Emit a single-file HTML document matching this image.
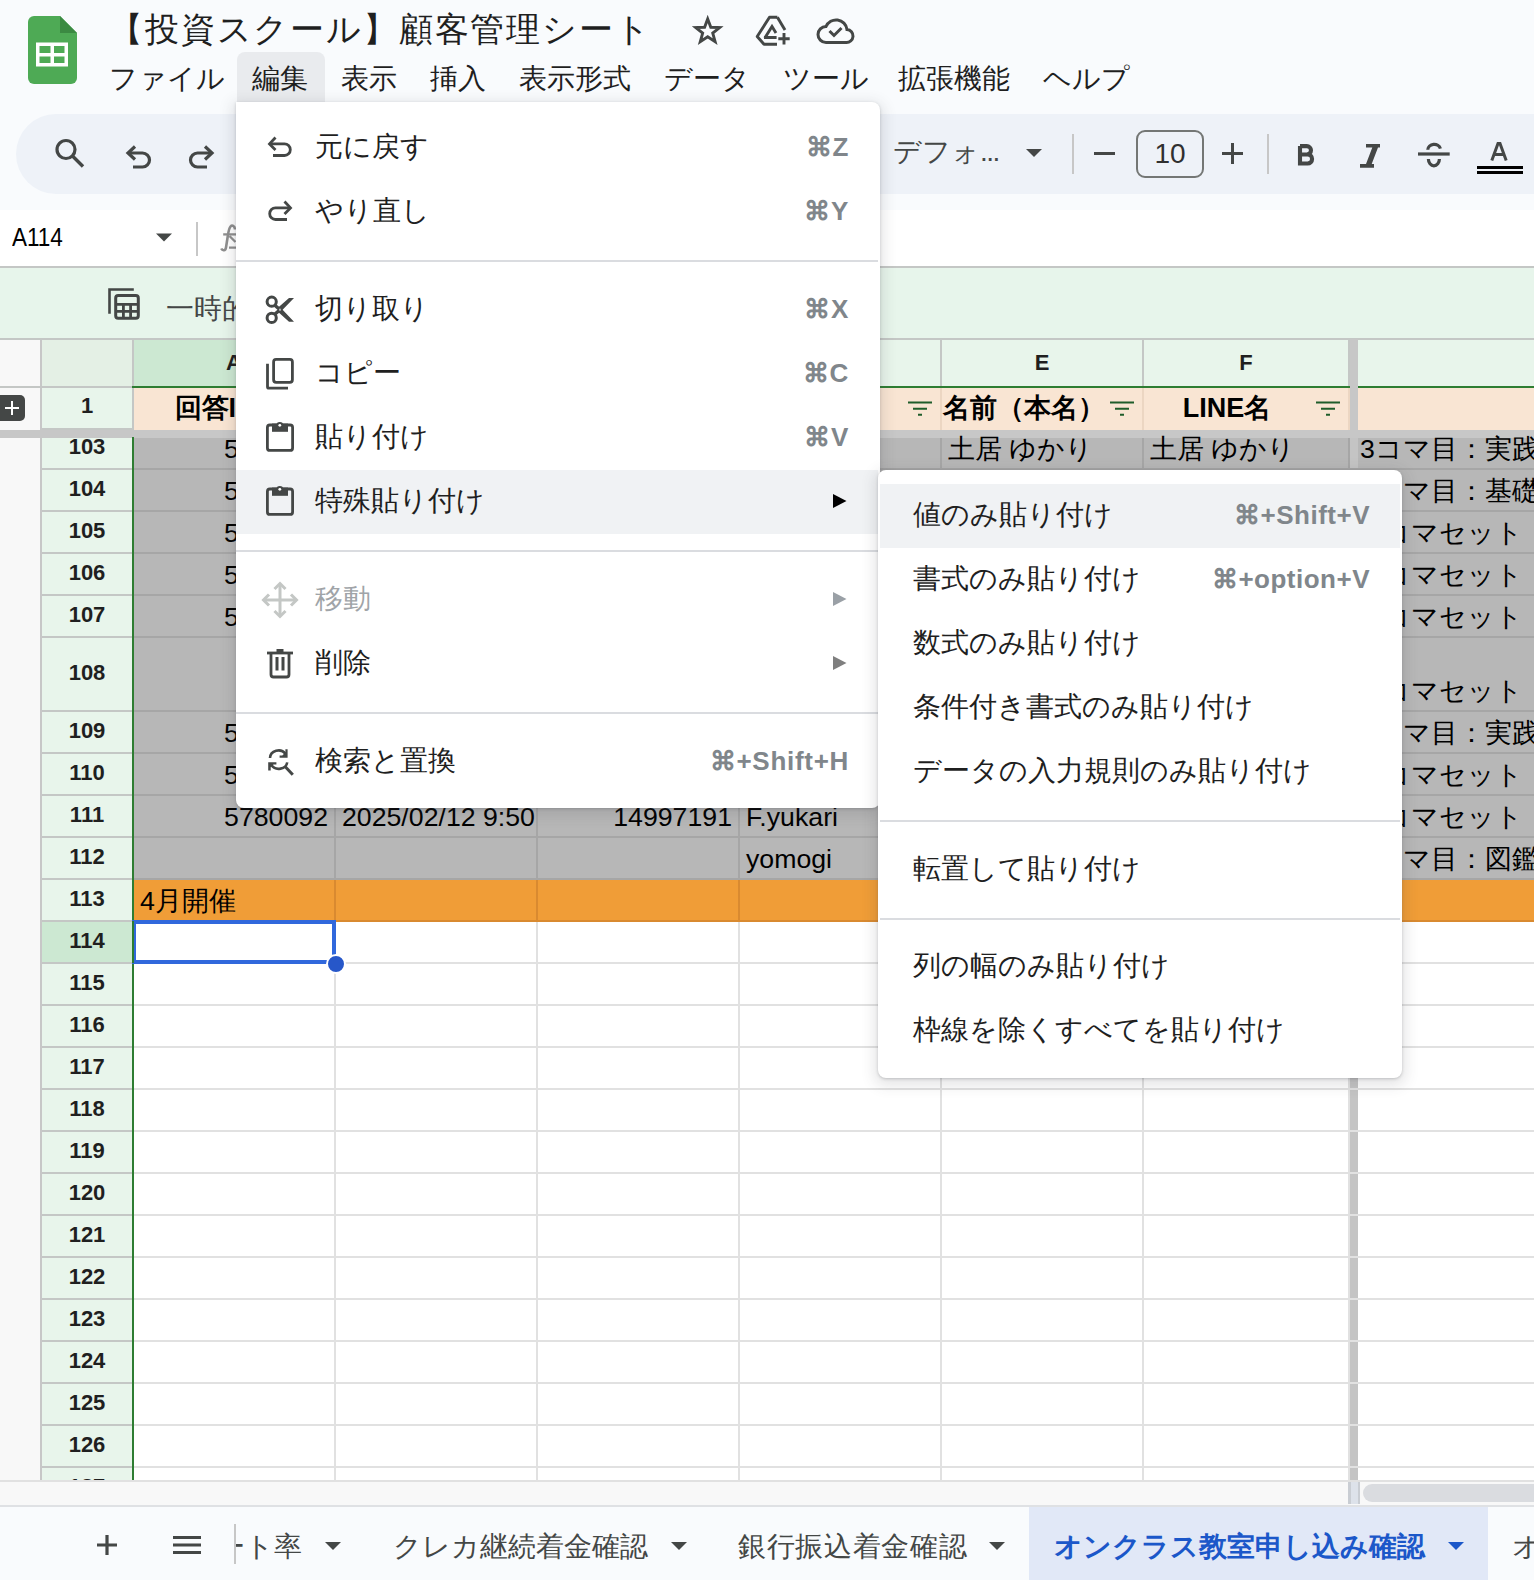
<!DOCTYPE html>
<html><head><meta charset="utf-8">
<style>
*{box-sizing:border-box;margin:0;padding:0}
html,body{width:1534px;height:1580px;overflow:hidden;background:#f9fbfd;font-family:"Liberation Sans",sans-serif;color:#1f1f1f}
.a{position:absolute;white-space:nowrap}
.mb{position:absolute;top:59px;font-size:28px;line-height:40px;color:#1f1f1f;white-space:nowrap}
.c{position:absolute;white-space:nowrap;font-size:26.7px;line-height:40px;color:#000;overflow:hidden}
.rh{position:absolute;left:42px;width:90px;text-align:center;font-size:22px;font-weight:bold;color:#1f1f1f;line-height:40px}
.mi{position:absolute;left:315px;font-size:28px;line-height:40px;color:#1f1f1f;white-space:nowrap}
.sc{position:absolute;right:685px;font-size:26px;letter-spacing:0.7px;font-weight:bold;line-height:40px;color:#80868b;white-space:nowrap;text-align:right}
.si{position:absolute;left:913px;font-size:28px;line-height:40px;color:#1f1f1f;white-space:nowrap}
.ss{position:absolute;right:164px;font-size:26px;letter-spacing:0.5px;font-weight:bold;line-height:40px;color:#80868b;white-space:nowrap;text-align:right}
.tab{position:absolute;top:1526px;font-size:28px;line-height:40px;color:#444746;white-space:nowrap}
</style></head><body>

<svg class="a" style="left:27px;top:15px" width="51" height="70" viewBox="0 0 51 70">
  <path d="M7 1 H33 L50 18 V63 a6 6 0 0 1 -6 6 H7 a6 6 0 0 1 -6 -6 V7 a6 6 0 0 1 6 -6z" fill="#4eaa55"/>
  <path d="M33 1 L50 18 H33z" fill="#3b8a42"/>
  <rect x="9" y="27.5" width="32" height="24" fill="#fff"/>
  <rect x="12.5" y="31" width="11" height="7" fill="#4eaa55"/>
  <rect x="27" y="31" width="10.5" height="7" fill="#4eaa55"/>
  <rect x="12.5" y="41.5" width="11" height="6.5" fill="#4eaa55"/>
  <rect x="27" y="41.5" width="10.5" height="6.5" fill="#4eaa55"/>
</svg>
<div class="a" id="title" style="left:109px;top:5px;font-size:34px;letter-spacing:1.85px;line-height:48px;color:#1f1f1f">【投資スクール】顧客管理シート</div>

<svg class="a" style="left:690px;top:13px" width="36" height="36" viewBox="0 0 36 36"><path d="M17.70 5.90 L20.81 14.22 L29.68 14.61 L22.73 20.14 L25.11 28.69 L17.70 23.79 L10.29 28.69 L12.67 20.14 L5.72 14.61 L14.59 14.22z" fill="none" stroke="#444746" stroke-width="2.9" stroke-linejoin="miter"/></svg>
<svg class="a" style="left:750px;top:10px" width="42" height="42" viewBox="0 0 42 42">
 <path d="M27.4 7.2 H19.5 L7.2 26.5 L14 34.2 H27" fill="none" stroke="#444746" stroke-width="2.9" stroke-linejoin="round"/>
 <path d="M27.4 7.2 L35 20" fill="none" stroke="#444746" stroke-width="2.9"/>
 <path d="M14 27.5 H26.6 M14.8 28 L22 16.5 L26 23" fill="none" stroke="#444746" stroke-width="2.9"/>
 <path d="M34 23 V34.5 M28.3 28.8 H39.7" fill="none" stroke="#444746" stroke-width="2.9"/>
</svg>
<svg class="a" style="left:816px;top:16px" width="40" height="30" viewBox="0 0 40 30">
 <path d="M10 26.5 H30 a6.5 6.5 0 0 0 1 -13 a11 11 0 0 0 -21 -3 a8 8 0 0 0 0 16z" fill="none" stroke="#444746" stroke-width="3"/>
 <path d="M13.5 15 L18 19.5 L25.5 12" fill="none" stroke="#444746" stroke-width="3"/>
</svg>

<div class="a" style="left:237px;top:52px;width:88px;height:50px;background:#e9ebee;border-radius:8px 8px 0 0"></div>
<div class="mb" style="left:109px">ファイル</div>
<div class="mb" style="left:252px">編集</div>
<div class="mb" style="left:341px">表示</div>
<div class="mb" style="left:430px">挿入</div>
<div class="mb" style="left:519px">表示形式</div>
<div class="mb" style="left:664px">データ</div>
<div class="mb" style="left:783px">ツール</div>
<div class="mb" style="left:898px">拡張機能</div>
<div class="mb" style="left:1043px">ヘルプ</div>
<div class="a" style="left:16px;top:114px;width:1560px;height:80px;background:#eef2f8;border-radius:40px"></div>
<svg class="a" style="left:50px;top:134px" width="40" height="40" viewBox="0 0 40 40"><circle cx="16" cy="15.5" r="9" fill="none" stroke="#444746" stroke-width="3.2"/><path d="M22.5 22 L33 32.5" stroke="#444746" stroke-width="3.4"/></svg>
<svg class="a" style="left:120px;top:140px" width="36" height="34" viewBox="0 0 36 34"><path d="M13 27 H22.5 a7 7 0 0 0 0 -14 H8" fill="none" stroke="#444746" stroke-width="3.2"/><path d="M15 6.5 L8 13 L15 19.5" fill="none" stroke="#444746" stroke-width="3.2"/></svg>
<svg class="a" style="left:184px;top:140px" width="36" height="34" viewBox="0 0 36 34"><path d="M23 27 H13.5 a7 7 0 0 1 0 -14 H28" fill="none" stroke="#444746" stroke-width="3.2"/><path d="M21 6.5 L28 13 L21 19.5" fill="none" stroke="#444746" stroke-width="3.2"/></svg>

<div class="a" style="left:893px;top:132px;font-size:28px;line-height:40px;color:#444746">デフォ<span style="letter-spacing:-1.5px">...</span></div>
<svg class="a" style="left:1024px;top:148px" width="20" height="12" viewBox="0 0 20 12"><path d="M2 1 H18 L10 9z" fill="#444746"/></svg>
<div class="a" style="left:1072px;top:134px;width:2px;height:40px;background:#c7c7c7"></div>
<div class="a" style="left:1094px;top:152px;width:21px;height:3px;background:#444746"></div>
<div class="a" style="left:1136px;top:130px;width:68px;height:48px;border:2px solid #747775;border-radius:9px;font-size:28px;line-height:44px;text-align:center;color:#303030">10</div>
<div class="a" style="left:1222px;top:152px;width:21px;height:3px;background:#444746"></div>
<div class="a" style="left:1231px;top:143px;width:3px;height:21px;background:#444746"></div>
<div class="a" style="left:1267px;top:134px;width:2px;height:40px;background:#c7c7c7"></div>
<svg class="a" style="left:1290px;top:140px" width="30" height="30" viewBox="0 0 30 30"><path d="M10 6.1 H16.8 a4.2 4.2 0 0 1 0 8.4 H10 M10 14.5 H17.6 a4.5 4.5 0 0 1 0 9 H10 V6.1" fill="none" stroke="#444746" stroke-width="4.1"/></svg>
<svg class="a" style="left:1356px;top:142px" width="30" height="30" viewBox="0 0 30 30"><path d="M10 2 H24 V5.4 H10z M4 22 H18 V25.7 H4z M16.3 5.4 L22 5.4 L15.7 22 L10 22z" fill="#444746"/></svg>
<svg class="a" style="left:1416px;top:140px" width="36" height="30" viewBox="0 0 36 30"><path d="M2 14 H33.7" stroke="#444746" stroke-width="3.2"/><path d="M11.8 9.8 A6.4 5.6 0 0 1 24.4 8.6" fill="none" stroke="#444746" stroke-width="3.2"/><path d="M12.4 19 A5.5 6.8 0 0 0 23.4 19" fill="none" stroke="#444746" stroke-width="3.2"/></svg>
<svg class="a" style="left:1480px;top:136px" width="36" height="30" viewBox="0 0 36 30"><path d="M11.8 24.5 L18 7.6 H20 L26.2 24.5 M14.2 18.5 H23.8" fill="none" stroke="#444746" stroke-width="3"/></svg>
<div class="a" style="left:1477px;top:166px;width:46px;height:2.5px;background:#000"></div>
<div class="a" style="left:1477px;top:171px;width:46px;height:2.5px;background:#000"></div>

<div class="a" style="left:0;top:210px;width:1534px;height:58px;background:#fff;border-bottom:2px solid #c4c7c5"></div>
<div class="a" style="left:12px;top:217px;font-size:26px;transform:scaleX(0.865);transform-origin:0 0;line-height:40px;color:#000">A114</div>
<svg class="a" style="left:154px;top:232px" width="20" height="12" viewBox="0 0 20 12"><path d="M2 1.5 H18 L10 9.5z" fill="#444746"/></svg>
<div class="a" style="left:196px;top:222px;width:2px;height:34px;background:#c7c7c7"></div>
<svg class="a" style="left:215px;top:220px" width="30" height="34" viewBox="0 0 30 34"><path d="M20 9.5 C19.8 5.5 17 4.8 15.5 6.5 C14 8.2 13.5 11 12.8 16 L11 27.5 C10.5 31 7.5 31 6.2 28.5" fill="none" stroke="#8e8e8e" stroke-width="2.6"/><path d="M8.2 14.4 H21" stroke="#8e8e8e" stroke-width="2.3"/><path d="M14 27.6 H21 M14.5 16 L20.5 22" stroke="#8e8e8e" stroke-width="2.3"/></svg>

<div class="a" style="left:0;top:268px;width:1534px;height:71px;background:#e7f5eb"></div>
<svg class="a" style="left:104px;top:284px" width="40" height="40" viewBox="0 0 40 40"><path d="M5.5 29.8 V5.5 H29.8" fill="none" stroke="#444746" stroke-width="2.6"/><rect x="11.7" y="11.5" width="22.6" height="22.8" rx="2.5" fill="none" stroke="#444746" stroke-width="3"/><path d="M11 20.4 H35 M11 27.4 H35 M19.4 20 V35 M26.6 20 V35" stroke="#444746" stroke-width="2.8"/></svg>
<div class="a" style="left:166px;top:289px;font-size:28px;line-height:40px;color:#444746">一時的</div>
<div class="a" style="left:0px;top:339px;width:40px;height:1141px;background:#f8f8f8;"></div>
<div class="a" style="left:40px;top:339px;width:2px;height:1141px;background:#c7c7c7;"></div>
<div class="a" style="left:0px;top:338px;width:1534px;height:2px;background:#c4c7c5;"></div>
<div class="a" style="left:42px;top:340px;width:90px;height:46px;background:#e4f0e5;"></div>
<div class="a" style="left:132px;top:340px;width:1402px;height:46px;background:#e8f5eb;"></div>
<div class="a" style="left:134px;top:340px;width:200px;height:46px;background:#cce8d2;"></div>
<div class="a" style="left:132px;top:339px;width:2px;height:47px;background:#c4c7c5;"></div>
<div class="a" style="left:334px;top:339px;width:2px;height:47px;background:#c4c7c5;"></div>
<div class="a" style="left:536px;top:339px;width:2px;height:47px;background:#c4c7c5;"></div>
<div class="a" style="left:738px;top:339px;width:2px;height:47px;background:#c4c7c5;"></div>
<div class="a" style="left:940px;top:339px;width:2px;height:47px;background:#c4c7c5;"></div>
<div class="a" style="left:1142px;top:339px;width:2px;height:47px;background:#c4c7c5;"></div>
<div class="a" style="left:1348px;top:339px;width:2px;height:47px;background:#c4c7c5;"></div>
<div class="a" style="left:1350px;top:339px;width:8px;height:47px;background:#c7c7c7;"></div>
<div class="a" style="left:134px;top:343px;width:200px;text-align:center;font-size:22px;font-weight:bold;line-height:40px;color:#1f1f1f">A</div>
<div class="a" style="left:336px;top:343px;width:200px;text-align:center;font-size:22px;font-weight:bold;line-height:40px;color:#1f1f1f">B</div>
<div class="a" style="left:538px;top:343px;width:200px;text-align:center;font-size:22px;font-weight:bold;line-height:40px;color:#1f1f1f">C</div>
<div class="a" style="left:740px;top:343px;width:200px;text-align:center;font-size:22px;font-weight:bold;line-height:40px;color:#1f1f1f">D</div>
<div class="a" style="left:942px;top:343px;width:200px;text-align:center;font-size:22px;font-weight:bold;line-height:40px;color:#1f1f1f">E</div>
<div class="a" style="left:1144px;top:343px;width:204px;text-align:center;font-size:22px;font-weight:bold;line-height:40px;color:#1f1f1f">F</div>
<div class="a" style="left:0px;top:386px;width:132px;height:2px;background:#c4c7c5;"></div>
<div class="a" style="left:132px;top:386px;width:1402px;height:2px;background:#2e7d32;"></div>
<div class="a" style="left:1350px;top:339px;width:8px;height:89px;background:#c7c7c7;"></div>
<div class="a" style="left:42px;top:388px;width:90px;height:40px;background:#e8f5eb;"></div>
<div class="a" style="left:134px;top:388px;width:1216px;height:42px;background:#f9e5d3;"></div>
<div class="a" style="left:1358px;top:388px;width:176px;height:42px;background:#f9e5d3;"></div>
<div class="a" style="left:334px;top:388px;width:2px;height:42px;background:#ecd6c2;"></div>
<div class="a" style="left:536px;top:388px;width:2px;height:42px;background:#ecd6c2;"></div>
<div class="a" style="left:738px;top:388px;width:2px;height:42px;background:#ecd6c2;"></div>
<div class="a" style="left:940px;top:388px;width:2px;height:42px;background:#ecd6c2;"></div>
<div class="a" style="left:1142px;top:388px;width:2px;height:42px;background:#ecd6c2;"></div>
<div class="a" style="left:1348px;top:388px;width:2px;height:42px;background:#ecd6c2;"></div>
<div class="a" style="left:1350px;top:388px;width:8px;height:42px;background:#c7c7c7;"></div>
<div class="rh" style="top:386px">1</div>
<div class="a" style="left:0;top:395px;width:25px;height:26px;background:#444746;border-radius:0 5px 5px 0"></div>
<div class="a" style="left:5px;top:406.8px;width:14.3px;height:2.3px;background:#fff"></div>
<div class="a" style="left:10.9px;top:400.8px;width:2.1px;height:14.3px;background:#fff"></div>
<div class="a" style="left:134px;top:388px;width:162px;text-align:center;font-weight:bold;font-size:27px;color:#000;line-height:40px">回答ID</div>
<div class="a" style="left:943px;top:388px;font-weight:bold;font-size:27px;color:#000;line-height:40px">名前（本名）</div>
<div class="a" style="left:1146px;top:388px;width:162px;text-align:center;font-weight:bold;font-size:27px;color:#000;line-height:40px">LINE名</div>
<svg class="a" style="left:906px;top:399px" width="28" height="18" viewBox="0 0 28 18"><path d="M2 3.5 H26 M7 9.8 H21 M12 15.7 H16" stroke="#1f5d2a" stroke-width="1.9"/></svg>
<svg class="a" style="left:1108px;top:399px" width="28" height="18" viewBox="0 0 28 18"><path d="M2 3.5 H26 M7 9.8 H21 M12 15.7 H16" stroke="#1f5d2a" stroke-width="1.9"/></svg>
<svg class="a" style="left:1314px;top:399px" width="28" height="18" viewBox="0 0 28 18"><path d="M2 3.5 H26 M7 9.8 H21 M12 15.7 H16" stroke="#1f5d2a" stroke-width="1.9"/></svg>
<div class="a" style="left:0px;top:430px;width:1534px;height:8px;background:#c7c7c7;"></div>
<div class="a" style="left:42px;top:428px;width:90px;height:2px;background:#c4c7c5;"></div>
<div class="a" style="left:42px;top:438px;width:90px;height:30px;background:#e8f5eb;"></div>
<div class="a" style="left:42px;top:468px;width:90px;height:2px;background:#c4c7c5;"></div>
<div class="a" style="left:134px;top:438px;width:1400px;height:30px;background:#b7b7b7;"></div>
<div class="a" style="left:134px;top:468px;width:1400px;height:2px;background:#a6a6a6;"></div>
<div class="a" style="left:334px;top:438px;width:2px;height:30px;background:#a6a6a6;"></div>
<div class="a" style="left:536px;top:438px;width:2px;height:30px;background:#a6a6a6;"></div>
<div class="a" style="left:738px;top:438px;width:2px;height:30px;background:#a6a6a6;"></div>
<div class="a" style="left:940px;top:438px;width:2px;height:30px;background:#a6a6a6;"></div>
<div class="a" style="left:1142px;top:438px;width:2px;height:30px;background:#a6a6a6;"></div>
<div class="a" style="left:1348px;top:438px;width:2px;height:30px;background:#a6a6a6;"></div>
<div class="a" style="left:1350px;top:438px;width:8px;height:30px;background:#c4c4c4;"></div>
<div class="rh" style="top:427px;line-height:40px">103</div>
<div class="a" style="left:42px;top:470px;width:90px;height:40px;background:#e8f5eb;"></div>
<div class="a" style="left:42px;top:510px;width:90px;height:2px;background:#c4c7c5;"></div>
<div class="a" style="left:134px;top:470px;width:1400px;height:40px;background:#b7b7b7;"></div>
<div class="a" style="left:134px;top:510px;width:1400px;height:2px;background:#a6a6a6;"></div>
<div class="a" style="left:334px;top:470px;width:2px;height:40px;background:#a6a6a6;"></div>
<div class="a" style="left:536px;top:470px;width:2px;height:40px;background:#a6a6a6;"></div>
<div class="a" style="left:738px;top:470px;width:2px;height:40px;background:#a6a6a6;"></div>
<div class="a" style="left:940px;top:470px;width:2px;height:40px;background:#a6a6a6;"></div>
<div class="a" style="left:1142px;top:470px;width:2px;height:40px;background:#a6a6a6;"></div>
<div class="a" style="left:1348px;top:470px;width:2px;height:40px;background:#a6a6a6;"></div>
<div class="a" style="left:1350px;top:470px;width:8px;height:40px;background:#c4c4c4;"></div>
<div class="rh" style="top:469px;line-height:40px">104</div>
<div class="a" style="left:42px;top:512px;width:90px;height:40px;background:#e8f5eb;"></div>
<div class="a" style="left:42px;top:552px;width:90px;height:2px;background:#c4c7c5;"></div>
<div class="a" style="left:134px;top:512px;width:1400px;height:40px;background:#b7b7b7;"></div>
<div class="a" style="left:134px;top:552px;width:1400px;height:2px;background:#a6a6a6;"></div>
<div class="a" style="left:334px;top:512px;width:2px;height:40px;background:#a6a6a6;"></div>
<div class="a" style="left:536px;top:512px;width:2px;height:40px;background:#a6a6a6;"></div>
<div class="a" style="left:738px;top:512px;width:2px;height:40px;background:#a6a6a6;"></div>
<div class="a" style="left:940px;top:512px;width:2px;height:40px;background:#a6a6a6;"></div>
<div class="a" style="left:1142px;top:512px;width:2px;height:40px;background:#a6a6a6;"></div>
<div class="a" style="left:1348px;top:512px;width:2px;height:40px;background:#a6a6a6;"></div>
<div class="a" style="left:1350px;top:512px;width:8px;height:40px;background:#c4c4c4;"></div>
<div class="rh" style="top:511px;line-height:40px">105</div>
<div class="a" style="left:42px;top:554px;width:90px;height:40px;background:#e8f5eb;"></div>
<div class="a" style="left:42px;top:594px;width:90px;height:2px;background:#c4c7c5;"></div>
<div class="a" style="left:134px;top:554px;width:1400px;height:40px;background:#b7b7b7;"></div>
<div class="a" style="left:134px;top:594px;width:1400px;height:2px;background:#a6a6a6;"></div>
<div class="a" style="left:334px;top:554px;width:2px;height:40px;background:#a6a6a6;"></div>
<div class="a" style="left:536px;top:554px;width:2px;height:40px;background:#a6a6a6;"></div>
<div class="a" style="left:738px;top:554px;width:2px;height:40px;background:#a6a6a6;"></div>
<div class="a" style="left:940px;top:554px;width:2px;height:40px;background:#a6a6a6;"></div>
<div class="a" style="left:1142px;top:554px;width:2px;height:40px;background:#a6a6a6;"></div>
<div class="a" style="left:1348px;top:554px;width:2px;height:40px;background:#a6a6a6;"></div>
<div class="a" style="left:1350px;top:554px;width:8px;height:40px;background:#c4c4c4;"></div>
<div class="rh" style="top:553px;line-height:40px">106</div>
<div class="a" style="left:42px;top:596px;width:90px;height:40px;background:#e8f5eb;"></div>
<div class="a" style="left:42px;top:636px;width:90px;height:2px;background:#c4c7c5;"></div>
<div class="a" style="left:134px;top:596px;width:1400px;height:40px;background:#b7b7b7;"></div>
<div class="a" style="left:134px;top:636px;width:1400px;height:2px;background:#a6a6a6;"></div>
<div class="a" style="left:334px;top:596px;width:2px;height:40px;background:#a6a6a6;"></div>
<div class="a" style="left:536px;top:596px;width:2px;height:40px;background:#a6a6a6;"></div>
<div class="a" style="left:738px;top:596px;width:2px;height:40px;background:#a6a6a6;"></div>
<div class="a" style="left:940px;top:596px;width:2px;height:40px;background:#a6a6a6;"></div>
<div class="a" style="left:1142px;top:596px;width:2px;height:40px;background:#a6a6a6;"></div>
<div class="a" style="left:1348px;top:596px;width:2px;height:40px;background:#a6a6a6;"></div>
<div class="a" style="left:1350px;top:596px;width:8px;height:40px;background:#c4c4c4;"></div>
<div class="rh" style="top:595px;line-height:40px">107</div>
<div class="a" style="left:42px;top:638px;width:90px;height:72px;background:#e8f5eb;"></div>
<div class="a" style="left:42px;top:710px;width:90px;height:2px;background:#c4c7c5;"></div>
<div class="a" style="left:134px;top:638px;width:1400px;height:72px;background:#b7b7b7;"></div>
<div class="a" style="left:134px;top:710px;width:1400px;height:2px;background:#a6a6a6;"></div>
<div class="a" style="left:334px;top:638px;width:2px;height:72px;background:#a6a6a6;"></div>
<div class="a" style="left:536px;top:638px;width:2px;height:72px;background:#a6a6a6;"></div>
<div class="a" style="left:738px;top:638px;width:2px;height:72px;background:#a6a6a6;"></div>
<div class="a" style="left:940px;top:638px;width:2px;height:72px;background:#a6a6a6;"></div>
<div class="a" style="left:1142px;top:638px;width:2px;height:72px;background:#a6a6a6;"></div>
<div class="a" style="left:1348px;top:638px;width:2px;height:72px;background:#a6a6a6;"></div>
<div class="a" style="left:1350px;top:638px;width:8px;height:72px;background:#c4c4c4;"></div>
<div class="rh" style="top:653px">108</div>
<div class="a" style="left:42px;top:712px;width:90px;height:40px;background:#e8f5eb;"></div>
<div class="a" style="left:42px;top:752px;width:90px;height:2px;background:#c4c7c5;"></div>
<div class="a" style="left:134px;top:712px;width:1400px;height:40px;background:#b7b7b7;"></div>
<div class="a" style="left:134px;top:752px;width:1400px;height:2px;background:#a6a6a6;"></div>
<div class="a" style="left:334px;top:712px;width:2px;height:40px;background:#a6a6a6;"></div>
<div class="a" style="left:536px;top:712px;width:2px;height:40px;background:#a6a6a6;"></div>
<div class="a" style="left:738px;top:712px;width:2px;height:40px;background:#a6a6a6;"></div>
<div class="a" style="left:940px;top:712px;width:2px;height:40px;background:#a6a6a6;"></div>
<div class="a" style="left:1142px;top:712px;width:2px;height:40px;background:#a6a6a6;"></div>
<div class="a" style="left:1348px;top:712px;width:2px;height:40px;background:#a6a6a6;"></div>
<div class="a" style="left:1350px;top:712px;width:8px;height:40px;background:#c4c4c4;"></div>
<div class="rh" style="top:711px;line-height:40px">109</div>
<div class="a" style="left:42px;top:754px;width:90px;height:40px;background:#e8f5eb;"></div>
<div class="a" style="left:42px;top:794px;width:90px;height:2px;background:#c4c7c5;"></div>
<div class="a" style="left:134px;top:754px;width:1400px;height:40px;background:#b7b7b7;"></div>
<div class="a" style="left:134px;top:794px;width:1400px;height:2px;background:#a6a6a6;"></div>
<div class="a" style="left:334px;top:754px;width:2px;height:40px;background:#a6a6a6;"></div>
<div class="a" style="left:536px;top:754px;width:2px;height:40px;background:#a6a6a6;"></div>
<div class="a" style="left:738px;top:754px;width:2px;height:40px;background:#a6a6a6;"></div>
<div class="a" style="left:940px;top:754px;width:2px;height:40px;background:#a6a6a6;"></div>
<div class="a" style="left:1142px;top:754px;width:2px;height:40px;background:#a6a6a6;"></div>
<div class="a" style="left:1348px;top:754px;width:2px;height:40px;background:#a6a6a6;"></div>
<div class="a" style="left:1350px;top:754px;width:8px;height:40px;background:#c4c4c4;"></div>
<div class="rh" style="top:753px;line-height:40px">110</div>
<div class="a" style="left:42px;top:796px;width:90px;height:40px;background:#e8f5eb;"></div>
<div class="a" style="left:42px;top:836px;width:90px;height:2px;background:#c4c7c5;"></div>
<div class="a" style="left:134px;top:796px;width:1400px;height:40px;background:#b7b7b7;"></div>
<div class="a" style="left:134px;top:836px;width:1400px;height:2px;background:#a6a6a6;"></div>
<div class="a" style="left:334px;top:796px;width:2px;height:40px;background:#a6a6a6;"></div>
<div class="a" style="left:536px;top:796px;width:2px;height:40px;background:#a6a6a6;"></div>
<div class="a" style="left:738px;top:796px;width:2px;height:40px;background:#a6a6a6;"></div>
<div class="a" style="left:940px;top:796px;width:2px;height:40px;background:#a6a6a6;"></div>
<div class="a" style="left:1142px;top:796px;width:2px;height:40px;background:#a6a6a6;"></div>
<div class="a" style="left:1348px;top:796px;width:2px;height:40px;background:#a6a6a6;"></div>
<div class="a" style="left:1350px;top:796px;width:8px;height:40px;background:#c4c4c4;"></div>
<div class="rh" style="top:795px;line-height:40px">111</div>
<div class="a" style="left:42px;top:838px;width:90px;height:40px;background:#e8f5eb;"></div>
<div class="a" style="left:42px;top:878px;width:90px;height:2px;background:#c4c7c5;"></div>
<div class="a" style="left:134px;top:838px;width:1400px;height:40px;background:#b7b7b7;"></div>
<div class="a" style="left:134px;top:878px;width:1400px;height:2px;background:#a6a6a6;"></div>
<div class="a" style="left:334px;top:838px;width:2px;height:40px;background:#a6a6a6;"></div>
<div class="a" style="left:536px;top:838px;width:2px;height:40px;background:#a6a6a6;"></div>
<div class="a" style="left:738px;top:838px;width:2px;height:40px;background:#a6a6a6;"></div>
<div class="a" style="left:940px;top:838px;width:2px;height:40px;background:#a6a6a6;"></div>
<div class="a" style="left:1142px;top:838px;width:2px;height:40px;background:#a6a6a6;"></div>
<div class="a" style="left:1348px;top:838px;width:2px;height:40px;background:#a6a6a6;"></div>
<div class="a" style="left:1350px;top:838px;width:8px;height:40px;background:#c4c4c4;"></div>
<div class="rh" style="top:837px;line-height:40px">112</div>
<div class="a" style="left:42px;top:880px;width:90px;height:40px;background:#e8f5eb;"></div>
<div class="a" style="left:42px;top:920px;width:90px;height:2px;background:#c4c7c5;"></div>
<div class="a" style="left:134px;top:880px;width:1400px;height:40px;background:#f09d37;"></div>
<div class="a" style="left:134px;top:920px;width:1400px;height:2px;background:#d98a30;"></div>
<div class="a" style="left:334px;top:880px;width:2px;height:40px;background:#d98a30;"></div>
<div class="a" style="left:536px;top:880px;width:2px;height:40px;background:#d98a30;"></div>
<div class="a" style="left:738px;top:880px;width:2px;height:40px;background:#d98a30;"></div>
<div class="a" style="left:940px;top:880px;width:2px;height:40px;background:#d98a30;"></div>
<div class="a" style="left:1142px;top:880px;width:2px;height:40px;background:#d98a30;"></div>
<div class="a" style="left:1348px;top:880px;width:2px;height:40px;background:#d98a30;"></div>
<div class="a" style="left:1350px;top:880px;width:8px;height:40px;background:#c4c4c4;"></div>
<div class="rh" style="top:879px;line-height:40px">113</div>
<div class="a" style="left:42px;top:922px;width:90px;height:40px;background:#cce8d2;"></div>
<div class="a" style="left:42px;top:962px;width:90px;height:2px;background:#c4c7c5;"></div>
<div class="a" style="left:134px;top:922px;width:1400px;height:40px;background:#ffffff;"></div>
<div class="a" style="left:134px;top:962px;width:1400px;height:2px;background:#e1e1e1;"></div>
<div class="a" style="left:334px;top:922px;width:2px;height:40px;background:#e1e1e1;"></div>
<div class="a" style="left:536px;top:922px;width:2px;height:40px;background:#e1e1e1;"></div>
<div class="a" style="left:738px;top:922px;width:2px;height:40px;background:#e1e1e1;"></div>
<div class="a" style="left:940px;top:922px;width:2px;height:40px;background:#e1e1e1;"></div>
<div class="a" style="left:1142px;top:922px;width:2px;height:40px;background:#e1e1e1;"></div>
<div class="a" style="left:1348px;top:922px;width:2px;height:40px;background:#e1e1e1;"></div>
<div class="a" style="left:1350px;top:922px;width:8px;height:40px;background:#c4c4c4;"></div>
<div class="rh" style="top:921px;line-height:40px">114</div>
<div class="a" style="left:42px;top:964px;width:90px;height:40px;background:#e8f5eb;"></div>
<div class="a" style="left:42px;top:1004px;width:90px;height:2px;background:#c4c7c5;"></div>
<div class="a" style="left:134px;top:964px;width:1400px;height:40px;background:#ffffff;"></div>
<div class="a" style="left:134px;top:1004px;width:1400px;height:2px;background:#e1e1e1;"></div>
<div class="a" style="left:334px;top:964px;width:2px;height:40px;background:#e1e1e1;"></div>
<div class="a" style="left:536px;top:964px;width:2px;height:40px;background:#e1e1e1;"></div>
<div class="a" style="left:738px;top:964px;width:2px;height:40px;background:#e1e1e1;"></div>
<div class="a" style="left:940px;top:964px;width:2px;height:40px;background:#e1e1e1;"></div>
<div class="a" style="left:1142px;top:964px;width:2px;height:40px;background:#e1e1e1;"></div>
<div class="a" style="left:1348px;top:964px;width:2px;height:40px;background:#e1e1e1;"></div>
<div class="a" style="left:1350px;top:964px;width:8px;height:40px;background:#c4c4c4;"></div>
<div class="rh" style="top:963px;line-height:40px">115</div>
<div class="a" style="left:42px;top:1006px;width:90px;height:40px;background:#e8f5eb;"></div>
<div class="a" style="left:42px;top:1046px;width:90px;height:2px;background:#c4c7c5;"></div>
<div class="a" style="left:134px;top:1006px;width:1400px;height:40px;background:#ffffff;"></div>
<div class="a" style="left:134px;top:1046px;width:1400px;height:2px;background:#e1e1e1;"></div>
<div class="a" style="left:334px;top:1006px;width:2px;height:40px;background:#e1e1e1;"></div>
<div class="a" style="left:536px;top:1006px;width:2px;height:40px;background:#e1e1e1;"></div>
<div class="a" style="left:738px;top:1006px;width:2px;height:40px;background:#e1e1e1;"></div>
<div class="a" style="left:940px;top:1006px;width:2px;height:40px;background:#e1e1e1;"></div>
<div class="a" style="left:1142px;top:1006px;width:2px;height:40px;background:#e1e1e1;"></div>
<div class="a" style="left:1348px;top:1006px;width:2px;height:40px;background:#e1e1e1;"></div>
<div class="a" style="left:1350px;top:1006px;width:8px;height:40px;background:#c4c4c4;"></div>
<div class="rh" style="top:1005px;line-height:40px">116</div>
<div class="a" style="left:42px;top:1048px;width:90px;height:40px;background:#e8f5eb;"></div>
<div class="a" style="left:42px;top:1088px;width:90px;height:2px;background:#c4c7c5;"></div>
<div class="a" style="left:134px;top:1048px;width:1400px;height:40px;background:#ffffff;"></div>
<div class="a" style="left:134px;top:1088px;width:1400px;height:2px;background:#e1e1e1;"></div>
<div class="a" style="left:334px;top:1048px;width:2px;height:40px;background:#e1e1e1;"></div>
<div class="a" style="left:536px;top:1048px;width:2px;height:40px;background:#e1e1e1;"></div>
<div class="a" style="left:738px;top:1048px;width:2px;height:40px;background:#e1e1e1;"></div>
<div class="a" style="left:940px;top:1048px;width:2px;height:40px;background:#e1e1e1;"></div>
<div class="a" style="left:1142px;top:1048px;width:2px;height:40px;background:#e1e1e1;"></div>
<div class="a" style="left:1348px;top:1048px;width:2px;height:40px;background:#e1e1e1;"></div>
<div class="a" style="left:1350px;top:1048px;width:8px;height:40px;background:#c4c4c4;"></div>
<div class="rh" style="top:1047px;line-height:40px">117</div>
<div class="a" style="left:42px;top:1090px;width:90px;height:40px;background:#e8f5eb;"></div>
<div class="a" style="left:42px;top:1130px;width:90px;height:2px;background:#c4c7c5;"></div>
<div class="a" style="left:134px;top:1090px;width:1400px;height:40px;background:#ffffff;"></div>
<div class="a" style="left:134px;top:1130px;width:1400px;height:2px;background:#e1e1e1;"></div>
<div class="a" style="left:334px;top:1090px;width:2px;height:40px;background:#e1e1e1;"></div>
<div class="a" style="left:536px;top:1090px;width:2px;height:40px;background:#e1e1e1;"></div>
<div class="a" style="left:738px;top:1090px;width:2px;height:40px;background:#e1e1e1;"></div>
<div class="a" style="left:940px;top:1090px;width:2px;height:40px;background:#e1e1e1;"></div>
<div class="a" style="left:1142px;top:1090px;width:2px;height:40px;background:#e1e1e1;"></div>
<div class="a" style="left:1348px;top:1090px;width:2px;height:40px;background:#e1e1e1;"></div>
<div class="a" style="left:1350px;top:1090px;width:8px;height:40px;background:#c4c4c4;"></div>
<div class="rh" style="top:1089px;line-height:40px">118</div>
<div class="a" style="left:42px;top:1132px;width:90px;height:40px;background:#e8f5eb;"></div>
<div class="a" style="left:42px;top:1172px;width:90px;height:2px;background:#c4c7c5;"></div>
<div class="a" style="left:134px;top:1132px;width:1400px;height:40px;background:#ffffff;"></div>
<div class="a" style="left:134px;top:1172px;width:1400px;height:2px;background:#e1e1e1;"></div>
<div class="a" style="left:334px;top:1132px;width:2px;height:40px;background:#e1e1e1;"></div>
<div class="a" style="left:536px;top:1132px;width:2px;height:40px;background:#e1e1e1;"></div>
<div class="a" style="left:738px;top:1132px;width:2px;height:40px;background:#e1e1e1;"></div>
<div class="a" style="left:940px;top:1132px;width:2px;height:40px;background:#e1e1e1;"></div>
<div class="a" style="left:1142px;top:1132px;width:2px;height:40px;background:#e1e1e1;"></div>
<div class="a" style="left:1348px;top:1132px;width:2px;height:40px;background:#e1e1e1;"></div>
<div class="a" style="left:1350px;top:1132px;width:8px;height:40px;background:#c4c4c4;"></div>
<div class="rh" style="top:1131px;line-height:40px">119</div>
<div class="a" style="left:42px;top:1174px;width:90px;height:40px;background:#e8f5eb;"></div>
<div class="a" style="left:42px;top:1214px;width:90px;height:2px;background:#c4c7c5;"></div>
<div class="a" style="left:134px;top:1174px;width:1400px;height:40px;background:#ffffff;"></div>
<div class="a" style="left:134px;top:1214px;width:1400px;height:2px;background:#e1e1e1;"></div>
<div class="a" style="left:334px;top:1174px;width:2px;height:40px;background:#e1e1e1;"></div>
<div class="a" style="left:536px;top:1174px;width:2px;height:40px;background:#e1e1e1;"></div>
<div class="a" style="left:738px;top:1174px;width:2px;height:40px;background:#e1e1e1;"></div>
<div class="a" style="left:940px;top:1174px;width:2px;height:40px;background:#e1e1e1;"></div>
<div class="a" style="left:1142px;top:1174px;width:2px;height:40px;background:#e1e1e1;"></div>
<div class="a" style="left:1348px;top:1174px;width:2px;height:40px;background:#e1e1e1;"></div>
<div class="a" style="left:1350px;top:1174px;width:8px;height:40px;background:#c4c4c4;"></div>
<div class="rh" style="top:1173px;line-height:40px">120</div>
<div class="a" style="left:42px;top:1216px;width:90px;height:40px;background:#e8f5eb;"></div>
<div class="a" style="left:42px;top:1256px;width:90px;height:2px;background:#c4c7c5;"></div>
<div class="a" style="left:134px;top:1216px;width:1400px;height:40px;background:#ffffff;"></div>
<div class="a" style="left:134px;top:1256px;width:1400px;height:2px;background:#e1e1e1;"></div>
<div class="a" style="left:334px;top:1216px;width:2px;height:40px;background:#e1e1e1;"></div>
<div class="a" style="left:536px;top:1216px;width:2px;height:40px;background:#e1e1e1;"></div>
<div class="a" style="left:738px;top:1216px;width:2px;height:40px;background:#e1e1e1;"></div>
<div class="a" style="left:940px;top:1216px;width:2px;height:40px;background:#e1e1e1;"></div>
<div class="a" style="left:1142px;top:1216px;width:2px;height:40px;background:#e1e1e1;"></div>
<div class="a" style="left:1348px;top:1216px;width:2px;height:40px;background:#e1e1e1;"></div>
<div class="a" style="left:1350px;top:1216px;width:8px;height:40px;background:#c4c4c4;"></div>
<div class="rh" style="top:1215px;line-height:40px">121</div>
<div class="a" style="left:42px;top:1258px;width:90px;height:40px;background:#e8f5eb;"></div>
<div class="a" style="left:42px;top:1298px;width:90px;height:2px;background:#c4c7c5;"></div>
<div class="a" style="left:134px;top:1258px;width:1400px;height:40px;background:#ffffff;"></div>
<div class="a" style="left:134px;top:1298px;width:1400px;height:2px;background:#e1e1e1;"></div>
<div class="a" style="left:334px;top:1258px;width:2px;height:40px;background:#e1e1e1;"></div>
<div class="a" style="left:536px;top:1258px;width:2px;height:40px;background:#e1e1e1;"></div>
<div class="a" style="left:738px;top:1258px;width:2px;height:40px;background:#e1e1e1;"></div>
<div class="a" style="left:940px;top:1258px;width:2px;height:40px;background:#e1e1e1;"></div>
<div class="a" style="left:1142px;top:1258px;width:2px;height:40px;background:#e1e1e1;"></div>
<div class="a" style="left:1348px;top:1258px;width:2px;height:40px;background:#e1e1e1;"></div>
<div class="a" style="left:1350px;top:1258px;width:8px;height:40px;background:#c4c4c4;"></div>
<div class="rh" style="top:1257px;line-height:40px">122</div>
<div class="a" style="left:42px;top:1300px;width:90px;height:40px;background:#e8f5eb;"></div>
<div class="a" style="left:42px;top:1340px;width:90px;height:2px;background:#c4c7c5;"></div>
<div class="a" style="left:134px;top:1300px;width:1400px;height:40px;background:#ffffff;"></div>
<div class="a" style="left:134px;top:1340px;width:1400px;height:2px;background:#e1e1e1;"></div>
<div class="a" style="left:334px;top:1300px;width:2px;height:40px;background:#e1e1e1;"></div>
<div class="a" style="left:536px;top:1300px;width:2px;height:40px;background:#e1e1e1;"></div>
<div class="a" style="left:738px;top:1300px;width:2px;height:40px;background:#e1e1e1;"></div>
<div class="a" style="left:940px;top:1300px;width:2px;height:40px;background:#e1e1e1;"></div>
<div class="a" style="left:1142px;top:1300px;width:2px;height:40px;background:#e1e1e1;"></div>
<div class="a" style="left:1348px;top:1300px;width:2px;height:40px;background:#e1e1e1;"></div>
<div class="a" style="left:1350px;top:1300px;width:8px;height:40px;background:#c4c4c4;"></div>
<div class="rh" style="top:1299px;line-height:40px">123</div>
<div class="a" style="left:42px;top:1342px;width:90px;height:40px;background:#e8f5eb;"></div>
<div class="a" style="left:42px;top:1382px;width:90px;height:2px;background:#c4c7c5;"></div>
<div class="a" style="left:134px;top:1342px;width:1400px;height:40px;background:#ffffff;"></div>
<div class="a" style="left:134px;top:1382px;width:1400px;height:2px;background:#e1e1e1;"></div>
<div class="a" style="left:334px;top:1342px;width:2px;height:40px;background:#e1e1e1;"></div>
<div class="a" style="left:536px;top:1342px;width:2px;height:40px;background:#e1e1e1;"></div>
<div class="a" style="left:738px;top:1342px;width:2px;height:40px;background:#e1e1e1;"></div>
<div class="a" style="left:940px;top:1342px;width:2px;height:40px;background:#e1e1e1;"></div>
<div class="a" style="left:1142px;top:1342px;width:2px;height:40px;background:#e1e1e1;"></div>
<div class="a" style="left:1348px;top:1342px;width:2px;height:40px;background:#e1e1e1;"></div>
<div class="a" style="left:1350px;top:1342px;width:8px;height:40px;background:#c4c4c4;"></div>
<div class="rh" style="top:1341px;line-height:40px">124</div>
<div class="a" style="left:42px;top:1384px;width:90px;height:40px;background:#e8f5eb;"></div>
<div class="a" style="left:42px;top:1424px;width:90px;height:2px;background:#c4c7c5;"></div>
<div class="a" style="left:134px;top:1384px;width:1400px;height:40px;background:#ffffff;"></div>
<div class="a" style="left:134px;top:1424px;width:1400px;height:2px;background:#e1e1e1;"></div>
<div class="a" style="left:334px;top:1384px;width:2px;height:40px;background:#e1e1e1;"></div>
<div class="a" style="left:536px;top:1384px;width:2px;height:40px;background:#e1e1e1;"></div>
<div class="a" style="left:738px;top:1384px;width:2px;height:40px;background:#e1e1e1;"></div>
<div class="a" style="left:940px;top:1384px;width:2px;height:40px;background:#e1e1e1;"></div>
<div class="a" style="left:1142px;top:1384px;width:2px;height:40px;background:#e1e1e1;"></div>
<div class="a" style="left:1348px;top:1384px;width:2px;height:40px;background:#e1e1e1;"></div>
<div class="a" style="left:1350px;top:1384px;width:8px;height:40px;background:#c4c4c4;"></div>
<div class="rh" style="top:1383px;line-height:40px">125</div>
<div class="a" style="left:42px;top:1426px;width:90px;height:40px;background:#e8f5eb;"></div>
<div class="a" style="left:42px;top:1466px;width:90px;height:2px;background:#c4c7c5;"></div>
<div class="a" style="left:134px;top:1426px;width:1400px;height:40px;background:#ffffff;"></div>
<div class="a" style="left:134px;top:1466px;width:1400px;height:2px;background:#e1e1e1;"></div>
<div class="a" style="left:334px;top:1426px;width:2px;height:40px;background:#e1e1e1;"></div>
<div class="a" style="left:536px;top:1426px;width:2px;height:40px;background:#e1e1e1;"></div>
<div class="a" style="left:738px;top:1426px;width:2px;height:40px;background:#e1e1e1;"></div>
<div class="a" style="left:940px;top:1426px;width:2px;height:40px;background:#e1e1e1;"></div>
<div class="a" style="left:1142px;top:1426px;width:2px;height:40px;background:#e1e1e1;"></div>
<div class="a" style="left:1348px;top:1426px;width:2px;height:40px;background:#e1e1e1;"></div>
<div class="a" style="left:1350px;top:1426px;width:8px;height:40px;background:#c4c4c4;"></div>
<div class="rh" style="top:1425px;line-height:40px">126</div>
<div class="a" style="left:42px;top:1468px;width:90px;height:40px;background:#e8f5eb;"></div>
<div class="a" style="left:42px;top:1508px;width:90px;height:2px;background:#c4c7c5;"></div>
<div class="a" style="left:134px;top:1468px;width:1400px;height:40px;background:#ffffff;"></div>
<div class="a" style="left:134px;top:1508px;width:1400px;height:2px;background:#e1e1e1;"></div>
<div class="a" style="left:334px;top:1468px;width:2px;height:40px;background:#e1e1e1;"></div>
<div class="a" style="left:536px;top:1468px;width:2px;height:40px;background:#e1e1e1;"></div>
<div class="a" style="left:738px;top:1468px;width:2px;height:40px;background:#e1e1e1;"></div>
<div class="a" style="left:940px;top:1468px;width:2px;height:40px;background:#e1e1e1;"></div>
<div class="a" style="left:1142px;top:1468px;width:2px;height:40px;background:#e1e1e1;"></div>
<div class="a" style="left:1348px;top:1468px;width:2px;height:40px;background:#e1e1e1;"></div>
<div class="a" style="left:1350px;top:1468px;width:8px;height:40px;background:#c4c4c4;"></div>
<div class="rh" style="top:1467px;line-height:40px">127</div>
<div class="a" style="left:132px;top:437px;width:2px;height:1043px;background:#2e7d32;"></div>
<div class="a" style="left:132px;top:388px;width:2px;height:42px;background:#c4c7c5;"></div>
<div class="a" style="left:128px;top:429px;width:200px;text-align:right;font-size:26.7px;color:#000;line-height:40px;">5780092</div>
<div class="a" style="left:128px;top:471px;width:200px;text-align:right;font-size:26.7px;color:#000;line-height:40px;">5780092</div>
<div class="a" style="left:128px;top:513px;width:200px;text-align:right;font-size:26.7px;color:#000;line-height:40px;">5780092</div>
<div class="a" style="left:128px;top:555px;width:200px;text-align:right;font-size:26.7px;color:#000;line-height:40px;">5780092</div>
<div class="a" style="left:128px;top:597px;width:200px;text-align:right;font-size:26.7px;color:#000;line-height:40px;">5780092</div>
<div class="a" style="left:128px;top:713px;width:200px;text-align:right;font-size:26.7px;color:#000;line-height:40px;">5780092</div>
<div class="a" style="left:128px;top:755px;width:200px;text-align:right;font-size:26.7px;color:#000;line-height:40px;">5780092</div>
<div class="a" style="left:128px;top:797px;width:200px;text-align:right;font-size:26.7px;color:#000;line-height:40px;">5780092</div>
<div class="a" style="left:342px;top:797px;font-size:26.7px;color:#000;line-height:40px;">2025/02/12 9:50</div>
<div class="a" style="left:532px;top:797px;width:200px;text-align:right;font-size:26.7px;color:#000;line-height:40px;">14997191</div>
<div class="a" style="left:746px;top:797px;font-size:26.7px;color:#000;line-height:40px;">F.yukari</div>
<div class="a" style="left:746px;top:839px;font-size:26.7px;color:#000;line-height:40px;">yomogi</div>
<div class="a" style="left:948px;top:429px;font-size:26.7px;color:#000;line-height:40px;">土居 ゆかり</div>
<div class="a" style="left:1150px;top:429px;font-size:26.7px;color:#000;line-height:40px;">土居 ゆかり</div>
<div class="a" style="left:1360px;top:429px;font-size:26.7px;color:#000;line-height:40px;">3コマ目：実践</div>
<div class="a" style="left:1360px;top:471px;font-size:26.7px;color:#000;line-height:40px;">3コマ目：基礎</div>
<div class="a" style="left:1368px;top:513px;font-size:26.7px;color:#000;line-height:40px;">4コマセット</div>
<div class="a" style="left:1368px;top:555px;font-size:26.7px;color:#000;line-height:40px;">4コマセット</div>
<div class="a" style="left:1368px;top:597px;font-size:26.7px;color:#000;line-height:40px;">4コマセット</div>
<div class="a" style="left:1368px;top:671px;font-size:26.7px;color:#000;line-height:40px;">4コマセット</div>
<div class="a" style="left:1360px;top:713px;font-size:26.7px;color:#000;line-height:40px;">3コマ目：実践</div>
<div class="a" style="left:1368px;top:755px;font-size:26.7px;color:#000;line-height:40px;">4コマセット</div>
<div class="a" style="left:1368px;top:797px;font-size:26.7px;color:#000;line-height:40px;">4コマセット</div>
<div class="a" style="left:1360px;top:839px;font-size:26.7px;color:#000;line-height:40px;">3コマ目：図鑑</div>
<div class="a" style="left:140px;top:881px;font-size:26.7px;color:#000;line-height:40px;">4月開催</div>
<div class="a" style="left:132px;top:920px;width:204px;height:44px;border:4px solid #3168dc"></div>
<div class="a" style="left:132px;top:921px;width:2px;height:42px;background:#2e7d32;"></div>
<div class="a" style="left:326px;top:954px;width:20px;height:20px;border-radius:50%;background:#2757c9;border:2px solid #fff"></div>
<div class="a" style="left:0px;top:1480px;width:1534px;height:2px;background:#e1e1e1;"></div>
<div class="a" style="left:0px;top:1482px;width:1534px;height:23px;background:#f8f8f8;"></div>
<div class="a" style="left:1348px;top:1482px;width:12px;height:22px;background:#c9cdd3;"></div>
<div class="a" style="left:1351px;top:1482px;width:7px;height:22px;background:#dde2ea;"></div>
<div class="a" style="left:1363px;top:1484px;width:200px;height:18px;background:#dadce0;border-radius:9px"></div>
<div class="a" style="left:0px;top:1505px;width:1534px;height:2px;background:#dfe1e4;"></div>
<div class="a" style="left:0px;top:1507px;width:1534px;height:73px;background:#f9fbfd;"></div>
<div class="a" style="left:1029px;top:1507px;width:459px;height:73px;background:#e1e8f7;"></div><svg class="a" style="left:95px;top:1533px" width="24" height="24" viewBox="0 0 24 24"><path d="M12 2 V22 M2 12 H22" stroke="#444746" stroke-width="3.2"/></svg>
<svg class="a" style="left:172px;top:1533px" width="30" height="24" viewBox="0 0 30 24"><path d="M1 4.5 H29 M1 12 H29 M1 19.5 H29" stroke="#444746" stroke-width="3.2"/></svg>
<div class="a" style="left:234px;top:1524px;width:2px;height:40px;background:#c7c7c7"></div>
<div class="a" style="left:236px;top:1527px;width:70px;overflow:hidden;font-size:28px;line-height:40px;color:#444746"><span style="margin-left:-19px">ート率</span></div>

<svg class="a" style="left:324px;top:1541px" width="18" height="10" viewBox="0 0 18 10"><path d="M1 1 H17 L9 9z" fill="#444746"/></svg>
<div class="a" style="left:393px;top:1527px;font-size:28px;line-height:40px;color:#444746">クレカ継続着金確認</div>
<svg class="a" style="left:670px;top:1541px" width="18" height="10" viewBox="0 0 18 10"><path d="M1 1 H17 L9 9z" fill="#444746"/></svg>
<div class="a" style="left:738px;top:1527px;font-size:28px;letter-spacing:0.7px;line-height:40px;color:#444746">銀行振込着金確認</div>
<svg class="a" style="left:988px;top:1541px" width="18" height="10" viewBox="0 0 18 10"><path d="M1 1 H17 L9 9z" fill="#444746"/></svg>
<div class="a" style="left:1054px;top:1527px;font-size:28px;font-weight:bold;line-height:40px;color:#1b57c9">オンクラス教室申し込み確認</div>
<svg class="a" style="left:1447px;top:1541px" width="18" height="10" viewBox="0 0 18 10"><path d="M1 1 H17 L9 9z" fill="#1b57c9"/></svg>
<div class="a" style="left:1512px;top:1527px;font-size:28px;line-height:40px;color:#444746">オ</div>
<div class="a" style="left:236px;top:102px;width:644px;height:706px;background:#fff;border-radius:0 8px 8px 8px;box-shadow:0 4px 14px 4px rgba(60,64,67,.13),0 1px 3px rgba(60,64,67,.25)"></div>
<div class="a" style="left:236px;top:470px;width:642px;height:64px;background:#f0f2f4"></div>
<div class="a" style="left:236px;top:260px;width:642px;height:2px;background:#dadce0"></div>
<div class="a" style="left:236px;top:550px;width:642px;height:2px;background:#dadce0"></div>
<div class="a" style="left:236px;top:712px;width:642px;height:2px;background:#dadce0"></div>
<div class="mi" style="top:127px;color:#1f1f1f">元に戻す</div>
<div class="sc" style="top:127px">⌘Z</div>
<div class="mi" style="top:191px;color:#1f1f1f">やり直し</div>
<div class="sc" style="top:191px">⌘Y</div>
<div class="mi" style="top:289px;color:#1f1f1f">切り取り</div>
<div class="sc" style="top:289px">⌘X</div>
<div class="mi" style="top:353px;color:#1f1f1f">コピー</div>
<div class="sc" style="top:353px">⌘C</div>
<div class="mi" style="top:417px;color:#1f1f1f">貼り付け</div>
<div class="sc" style="top:417px">⌘V</div>
<div class="mi" style="top:481px;color:#1f1f1f">特殊貼り付け</div>
<div class="mi" style="top:579px;color:#a0a4a8">移動</div>
<div class="mi" style="top:643px;color:#1f1f1f">削除</div>
<div class="mi" style="top:741px;color:#1f1f1f">検索と置換</div>
<div class="sc" style="top:741px">⌘+Shift+H</div>
<svg class="a" style="left:832px;top:492px" width="16" height="18" viewBox="0 0 16 18"><path d="M1 2 L14.5 9 L1 16z" fill="#000"/></svg>
<svg class="a" style="left:832px;top:590px" width="16" height="18" viewBox="0 0 16 18"><path d="M1 2 L14.5 9 L1 16z" fill="#9aa0a6"/></svg>
<svg class="a" style="left:832px;top:654px" width="16" height="18" viewBox="0 0 16 18"><path d="M1 2 L14.5 9 L1 16z" fill="#7f7f7f"/></svg>
<svg class="a" style="left:264px;top:131px" width="32" height="32" viewBox="0 0 32 32"><path d="M9 24.5 H20.5 a5.8 5.8 0 0 0 0 -11.6 H6" fill="none" stroke="#444746" stroke-width="2.8"/><path d="M11.5 6.5 L5.5 12.9 L11.5 19" fill="none" stroke="#444746" stroke-width="2.8"/></svg>
<svg class="a" style="left:264px;top:195px" width="32" height="32" viewBox="0 0 32 32"><path d="M23 24.5 H11.5 a5.8 5.8 0 0 1 0 -11.6 H26" fill="none" stroke="#444746" stroke-width="2.8"/><path d="M20.5 6.5 L26.5 12.9 L20.5 19" fill="none" stroke="#444746" stroke-width="2.8"/></svg>
<svg class="a" style="left:260px;top:290px" width="40" height="40" viewBox="0 0 40 40"><circle cx="11.7" cy="11.7" r="4.6" fill="none" stroke="#444746" stroke-width="3"/><circle cx="11.7" cy="27.9" r="4.6" fill="none" stroke="#444746" stroke-width="3"/><path d="M14.5 15 L20 19.7 L14.5 24.5" fill="none" stroke="#444746" stroke-width="3.4"/><path d="M18.2 17.6 L29 8.1 H34 L22.6 19.7 L34 31.8 H29 L18.2 22z" fill="#444746"/><rect x="19" y="18.7" width="2" height="2" fill="#b0b0b0"/></svg>
<svg class="a" style="left:262px;top:354px" width="36" height="40" viewBox="0 0 36 40"><rect x="11.6" y="5.4" width="18.8" height="22.9" rx="2.5" fill="none" stroke="#444746" stroke-width="2.8"/><path d="M5.5 9.8 V32.7 a1.5 1.5 0 0 0 1.5 1.5 H26" fill="none" stroke="#444746" stroke-width="2.8"/></svg>

<svg class="a" style="left:262px;top:419px" width="36" height="36" viewBox="0 0 36 36"><rect x="5.4" y="6" width="25.2" height="25.4" rx="2.5" fill="none" stroke="#444746" stroke-width="2.8"/><rect x="10" y="4.6" width="16" height="8.2" fill="#444746"/><circle cx="17.8" cy="6.3" r="3.4" fill="#444746"/><circle cx="17.8" cy="6.3" r="1.4" fill="#fff"/></svg>
<svg class="a" style="left:262px;top:483px" width="36" height="36" viewBox="0 0 36 36"><rect x="5.4" y="6" width="25.2" height="25.4" rx="2.5" fill="none" stroke="#444746" stroke-width="2.8"/><rect x="10" y="4.6" width="16" height="8.2" fill="#444746"/><circle cx="17.8" cy="6.3" r="3.4" fill="#444746"/><circle cx="17.8" cy="6.3" r="1.4" fill="#fff"/></svg>
<svg class="a" style="left:260px;top:580px" width="40" height="40" viewBox="0 0 40 40"><path d="M20 4 V36 M4 20 H36" stroke="#c4c7c5" stroke-width="3"/><path d="M14.5 9 L20 3.5 L25.5 9 M14.5 31 L20 36.5 L25.5 31 M9 14.5 L3.5 20 L9 25.5 M31 14.5 L36.5 20 L31 25.5" fill="none" stroke="#c4c7c5" stroke-width="3"/></svg>
<svg class="a" style="left:264px;top:648px" width="32" height="32" viewBox="0 0 32 32"><path d="M3 5 H29" stroke="#444746" stroke-width="2.8"/><path d="M12.5 2.5 H19.5" stroke="#444746" stroke-width="3"/><path d="M7 5 V26.5 a2.5 2.5 0 0 0 2.5 2.5 H22.5 a2.5 2.5 0 0 0 2.5 -2.5 V5" fill="none" stroke="#444746" stroke-width="2.8"/><path d="M13 9 V22.5 M19 9 V22.5" stroke="#444746" stroke-width="3"/></svg>
<svg class="a" style="left:264px;top:746px" width="32" height="32" viewBox="0 0 32 32"><path d="M6 12 A8.5 7.8 0 0 1 21.5 7.8" fill="none" stroke="#444746" stroke-width="2.6"/><path d="M21.4 3.3 H23.6 V11.7 H15.6 V9.6 H18.3 L21.4 6.5 Z" fill="#444746"/><path d="M4.2 16.2 H12.4 V18.5 H9.5 L6.7 21.3 V24.4 H4.2 Z" fill="#444746"/><path d="M7.5 19.3 A8.5 7.3 0 0 0 23.2 16.4" fill="none" stroke="#444746" stroke-width="2.6"/><path d="M20.8 20.3 L28.8 28.8" stroke="#444746" stroke-width="3"/></svg>

<div class="a" style="left:878px;top:470px;width:524px;height:608px;background:#fff;border-radius:8px;box-shadow:0 4px 14px 4px rgba(60,64,67,.13),0 1px 3px rgba(60,64,67,.25)"></div>
<div class="a" style="left:880px;top:484px;width:520px;height:64px;background:#f0f2f4"></div>
<div class="a" style="left:880px;top:820px;width:520px;height:2px;background:#dadce0"></div>
<div class="a" style="left:880px;top:918px;width:520px;height:2px;background:#dadce0"></div>
<div class="si" style="top:495px">値のみ貼り付け</div>
<div class="ss" style="top:495px">⌘+Shift+V</div>
<div class="si" style="top:559px">書式のみ貼り付け</div>
<div class="ss" style="top:559px">⌘+option+V</div>
<div class="si" style="top:623px">数式のみ貼り付け</div>
<div class="si" style="top:687px">条件付き書式のみ貼り付け</div>
<div class="si" style="top:751px">データの入力規則のみ貼り付け</div>
<div class="si" style="top:849px">転置して貼り付け</div>
<div class="si" style="top:946px">列の幅のみ貼り付け</div>
<div class="si" style="top:1010px">枠線を除くすべてを貼り付け</div></body></html>
